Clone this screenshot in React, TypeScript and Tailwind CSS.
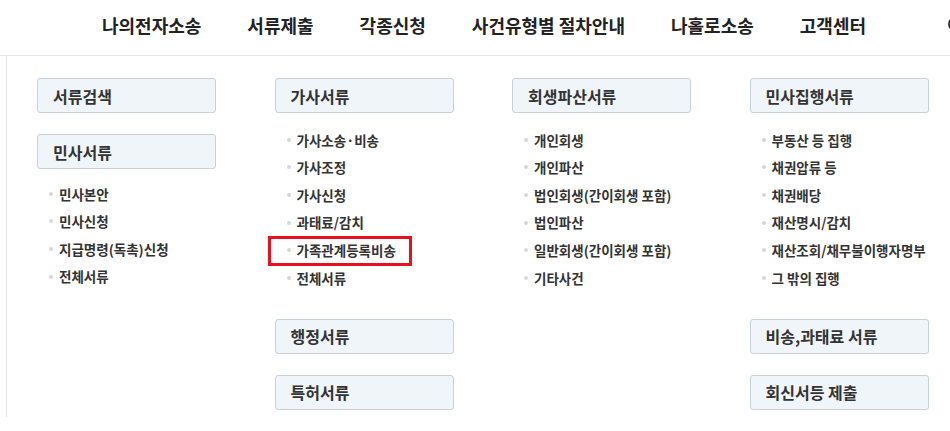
import React from "react";

type Group = { title: string; items?: string[]; pt?: string };

const columns: Group[][] = [
  [
    { title: "서류검색" },
    { title: "민사서류", items: ["민사본안", "민사신청", "지급명령(독촉)신청", "전체서류"], pt: "pt-[11px]" },
  ],
  [
    { title: "가사서류", items: ["가사소송·비송", "가사조정", "가사신청", "과태료/감치", "가족관계등록비송", "전체서류"] },
    { title: "행정서류" },
    { title: "특허서류" },
  ],
  [
    {
      title: "회생파산서류",
      items: ["개인회생", "개인파산", "법인회생(간이회생 포함)", "법인파산", "일반회생(간이회생 포함)", "기타사건"],
    },
  ],
  [
    {
      title: "민사집행서류",
      items: ["부동산 등 집행", "채권압류 등", "채권배당", "재산명시/감치", "재산조회/채무불이행자명부", "그 밖의 집행"],
    },
    { title: "비송,과태료 서류" },
    { title: "회신서등 제출" },
  ],
];

const nav = ["나의전자소송", "서류제출", "각종신청", "사건유형별 절차안내", "나홀로소송", "고객센터"];

const font = { fontFamily: '"Noto Sans CJK KR", "Noto Sans", sans-serif' };

function GroupBlock({ group }: { group: Group }) {
  return (
    <div>
      <div className="flex h-[35px] items-center rounded-[3px] border border-[#c9d0d9] bg-[#f0f5fa] pl-[15px] text-[16px] font-bold text-[#333]">
        {group.title}
      </div>
      {group.items && (
        <ul className={`${group.pt ?? "pt-[13px]"} pb-[6px]`}>
          {group.items.map((item) => (
            <li key={item} className="relative flex h-[27.6px] items-center gap-[6px] pl-3 text-[13.5px] font-bold text-[#333]">
              <span className="h-[4px] w-[4px] rounded-full bg-[#d6d6d6]" />
              {item}
              {item === "가족관계등록비송" && (
                <span className="absolute -left-[7px] top-0 h-[30px] w-[144px] border-[3px] border-[#e8101e]" />
              )}
            </li>
          ))}
        </ul>
      )}
    </div>
  );
}

export default function App() {
  return (
    <div className="h-[431px] w-[950px] overflow-hidden bg-white" style={font}>
      <header className="flex h-[56px] items-center border-b border-[#e3e6ea] pb-[5px] pl-[102px]">
        <nav className="flex items-center gap-[46px] text-[18px] font-bold text-[#222]">
          {nav.map((n) => (
            <span key={n} className="whitespace-nowrap">{n}</span>
          ))}
          <svg className="ml-[35px] h-[18px] w-[18px] shrink-0" viewBox="0 0 18 18" fill="none" stroke="#333" strokeWidth="2">
            <circle cx="8" cy="8" r="6" />
            <path d="M12.5 12.5L17 17" />
          </svg>
        </nav>
      </header>
      <div className="ml-[6px] flex h-[361px] gap-[58.5px] border-l border-[#e3e3e3] pl-[30px] pt-[22px]">
        {columns.map((col, i) => (
          <div key={i} className="flex w-[179px] flex-col gap-[21px]">
            {col.map((g) => (
              <GroupBlock key={g.title} group={g} />
            ))}
          </div>
        ))}
      </div>
    </div>
  );
}
